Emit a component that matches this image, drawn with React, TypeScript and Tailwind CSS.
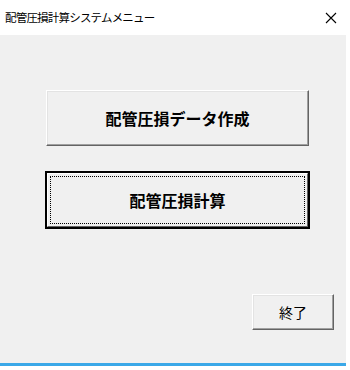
import React from "react";

const jp = { fontFamily: '"Noto Sans CJK JP", "Noto Sans", sans-serif' };

export default function App() {
  return (
    <div className="w-[350px] h-[370px] bg-white overflow-hidden" style={jp}>
      <div className="w-[346px] h-[370px] flex flex-col">
        <div className="h-[35px] bg-white flex items-center justify-between pl-[5px] pr-[8px]">
          <span className="text-[11.5px] text-black tracking-[-0.8px]">配管圧損計算システムメニュー</span>
          <svg width="12" height="12" viewBox="0 0 12 12" className="mr-[1px]">
            <path d="M1 1 L11 11 M11 1 L1 11" stroke="#000" strokeWidth="1.1" />
          </svg>
        </div>
        <div className="flex-1 bg-[#f0f0f0] flex flex-col pt-[55px]">
          <button className="ml-[46px] w-[263px] h-[56px] bg-[#f0f0f0] border border-t-white border-l-white border-r-[#646464] border-b-[#646464] shadow-[inset_-1px_-1px_0_#a0a0a0,inset_1px_1px_0_#e3e3e3] flex items-center justify-center">
            <span className="text-[16px] font-bold text-black">配管圧損データ作成</span>
          </button>
          <button className="ml-[45px] mt-[25px] w-[265px] h-[58px] bg-[#f0f0f0] border-2 border-black p-0">
            <div className="w-full h-full border border-t-white border-l-white border-r-[#646464] border-b-[#646464] p-[2px]">
              <div className="w-full h-full border border-dotted border-black flex items-center justify-center">
                <span className="text-[16px] font-bold text-black">配管圧損計算</span>
              </div>
            </div>
          </button>
          <div className="flex justify-end pr-[12px] mt-[65px]">
            <button className="w-[82px] h-[36px] bg-[#f0f0f0] border border-t-white border-l-white border-r-[#646464] border-b-[#646464] shadow-[inset_-1px_-1px_0_#a0a0a0,inset_1px_1px_0_#e3e3e3] flex items-center justify-center">
              <span className="text-[14px] text-black">終了</span>
            </button>
          </div>
          <div className="flex-1" />
          <div className="h-[3px] bg-[#3aa8e8]" />
        </div>
        <div className="h-[4px] bg-white" />
      </div>
    </div>
  );
}
